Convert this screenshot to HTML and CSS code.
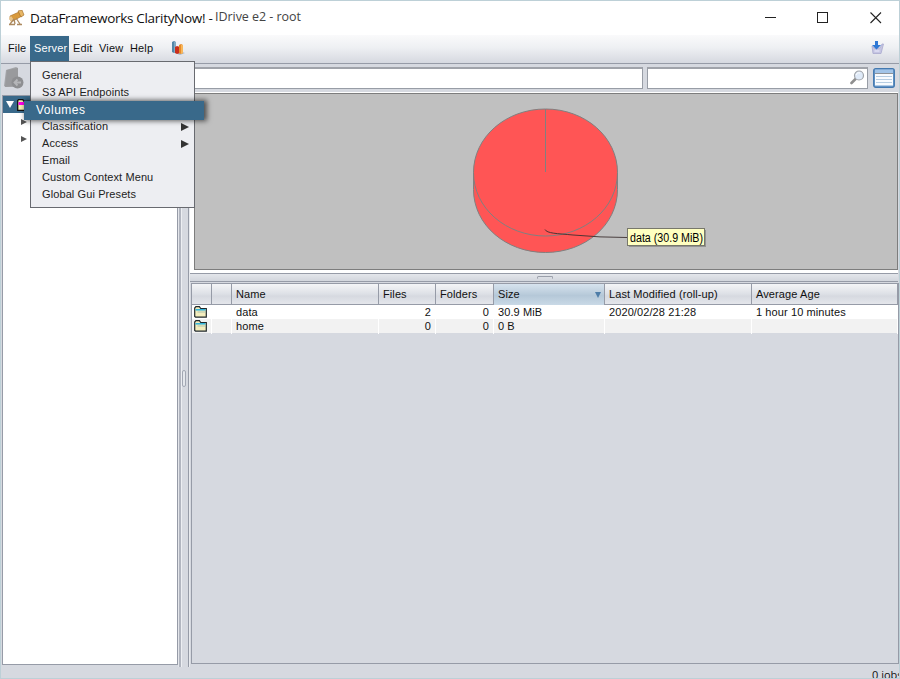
FILE: index.html
```html
<!DOCTYPE html>
<html>
  <head>
    <meta charset="utf-8">
    <title>DataFrameworks ClarityNow!</title>
    <link rel="stylesheet" href="styles.css">
  </head>
  <body>
    <div class="window">
      <div class="titlebar">
        <svg class="app-icon" width="17" height="16" viewBox="0 0 17 16">
          <path d="M2 6l9-4 3 4-9 5-3-1z" fill="#d99a3c" stroke="#a86a20" stroke-width=".6"/>
          <path d="M10 1l4-1 2 5-3 2z" fill="#e8b766" stroke="#9c6420" stroke-width=".6"/>
          <path d="M1 8l2-2 3 4-3 2z" fill="#e9c58c"/>
          <path d="M6 9l-4 5M6 9l1 5M8 8l4 6M1 14.500h6M9 14.500h5" stroke="#ad8a60" stroke-width="1.300" fill="none"/>
        </svg>
        <span class="app-name">DataFrameworks ClarityNow! -</span>
        <span class="doc-name">IDrive e2 - root</span>
        <svg class="win-buttons" width="118" height="14" viewBox="0 0 118 14" fill="none" stroke="#222">
          <path d="M0 6.5h11" />
          <rect x="52.5" y="1.5" width="10" height="10"/>
          <path d="M105.500 1.500l10.500 10.500M116 1.500l-10.500 10.500" stroke-width="1.100"/>
        </svg>
      </div>

      <div class="menubar">
        <span class="menu m-file">File</span>
        <div class="menu m-server open">Server
          <div class="dropdown">
            <div class="item">General</div>
            <div class="item">S3 API Endpoints</div>
            <div class="item">&nbsp;</div>
            <div class="item">Classification<i class="arrow"></i></div>
            <div class="item">Access<i class="arrow"></i></div>
            <div class="item">Email</div>
            <div class="item">Custom Context Menu</div>
            <div class="item">Global Gui Presets</div>
            <div class="selected">Volumes</div>
          </div>
        </div>
        <span class="menu m-edit">Edit</span>
        <span class="menu m-view">View</span>
        <span class="menu m-help">Help</span>
        <svg class="bars" width="14" height="14" viewBox="0 0 14 14">
          <path d="M4 12l5 2 5-2-3-1z" fill="#aab8c8"/>
          <path d="M1 1l2-1 2 1v10l-2 1-2-1z" fill="#5387a8"/>
          <path d="M3 1l2 0v10l-2 1z" fill="#80abc5"/>
          <path d="M4 6l2-1 3 1v6l-3 1-2-1z" fill="#c92f1d"/>
          <path d="M8 4l2-1 2 1v8l-2 1-2-1z" fill="#e98b27"/>
          <path d="M10 4l2 0v8l-2 1z" fill="#f7b75c"/>
        </svg>
        <svg class="download" width="13" height="13" viewBox="0 0 13 13">
          <path d="M1 5l2 2h6l2-4h1.500l-2.500 9.500h-8z" fill="#c5c5e2" stroke="#a9a9cf" stroke-width=".8"/>
          <path d="M3.500 10h5" stroke="#eef"/>
          <path d="M4 0h3v4h3l-4.500 4.500L1 4h3z" fill="#2f78d5"/>
        </svg>
      </div>

      <div class="toolbar">
        <svg class="back" width="20" height="22" viewBox="0 0 20 22">
          <path d="M2 3l10-3 2 1 0 19-12 0-2-1z" fill="#a4a5a8"/>
          <path d="M3 3l11-2v17l-13 2z" fill="#999a9d"/>
          <circle cx="13.500" cy="15.500" r="6" fill="#8d8e91"/>
          <path d="M17 15.500h-6M13.500 12.500l-3 3 3 3" stroke="#b5b6b9" stroke-width="1.800" fill="none"/>
        </svg>
        <div class="field path"></div>
        <div class="field search">
          <svg width="15" height="15" viewBox="0 0 15 15">
            <path d="M5.500 9L1.500 13" stroke="#8f8f8f" stroke-width="2.600" stroke-linecap="round"/>
            <circle cx="9" cy="5.500" r="4.500" fill="#dfeaf8" stroke="#a0a4aa" stroke-width="1.200"/>
            <path d="M6 5a3 3 0 0 1 4-2" stroke="#fff" fill="none"/>
          </svg>
        </div>
        <svg class="list" width="22" height="20" viewBox="0 0 22 20">
          <rect x=".7" y=".7" width="20.600" height="18.600" rx="2" fill="#6f9dcc" stroke="#4379b0" stroke-width="1.300"/>
          <rect x="2" y="1.500" width="18" height="3.500" fill="#a1c4e8"/>
          <rect x="2" y="5" width="18" height="12.500" fill="#f8fbfe"/>
          <path d="M2 5.500h18" stroke="#8d9298"/>
          <path d="M3 8.500h16M3 11.500h16M3 14.500h16" stroke="#b6cde2"/>
        </svg>
      </div>

      <div class="main">
        <div class="sidebar">
          <div class="tree">
            <div class="node root">
              <i class="tri-down"></i>
              <svg width="13" height="12" viewBox="0 0 13 12">
                <path d="M.7 11.300V1.500l1-1h4l1.500 2h5v8.800z" fill="#f4f0b4" stroke="#111" stroke-width="1.300"/>
                <path d="M1.500 3h10.500v3h-10.500z" fill="#f0e"/>
              </svg>
            </div>
            <div class="node"><i class="tri"></i></div>
            <div class="node"><i class="tri"></i></div>
          </div>
        </div>
        <div class="vsplit"><i></i></div>
        <div class="content">
          <div class="chart">
            <svg width="702" height="175" viewBox="195 94 702 175">
              <path d="M473.500 172.500C473.500 137 506 109 545.500 109s72 28 72 63.500v17C617.500 225 585 252.500 545.500 252.500s-72-27.500-72-63z" fill="#f55" stroke="#808080"/>
              <path d="M473.500 172.500C473.500 208 506 236 545.500 236s72-28 72-63.500" fill="none" stroke="#808080"/>
              <rect x="545" y="109" width="1" height="63" fill="#808080"/>
              <path d="M545 229.500c2 4 12 4 28 5.500q27 2.500 54 2.500" fill="none" stroke="#3c3030" stroke-width=".9"/>
              <rect x="629" y="230" width="77" height="17" fill="#939393"/>
              <rect x="627.500" y="228.500" width="77" height="17" fill="#ffffc0" stroke="#77776a"/>
              <text x="630" y="242" textLength="73" lengthAdjust="spacingAndGlyphs">data (30.9 MiB)</text>
            </svg>
          </div>
          <div class="hsplit"><i></i></div>
          <div class="table">
            <div class="row head">
              <div></div><div></div><div>Name</div><div>Files</div><div>Folders</div>
              <div class="sorted">Size<i></i></div><div class="mod">Last Modified (roll-up)</div><div>Average Age</div>
            </div>
            <div class="row">
              <div class="icon"><svg width="13" height="12" viewBox="0 0 13 12"><path d="M.7 10.500V2l1.200-1.300h3.500l1.300 1.800h5.600v8.600h-10.800z" fill="#f3edbd" stroke="#20282b" stroke-width="1.200"/><path d="M1.500 3.800h10" stroke="#31b4dc" stroke-width="1.600"/><path d="M3.500 6h8.500" stroke="#9fb8a8" stroke-width=".8"/></svg></div>
              <div></div><div>data</div><div class="num">2</div><div class="num">0</div>
              <div>30.9 MiB</div><div class="mod">2020/02/28 21:28</div><div>1 hour 10 minutes</div>
            </div>
            <div class="row alt">
              <div class="icon"><svg width="13" height="12" viewBox="0 0 13 12"><path d="M.7 10.500V2l1.200-1.300h3.500l1.300 1.800h5.600v8.600h-10.800z" fill="#f3edbd" stroke="#20282b" stroke-width="1.200"/><path d="M1.500 3.800h10" stroke="#31b4dc" stroke-width="1.600"/><path d="M3.500 6h8.500" stroke="#9fb8a8" stroke-width=".8"/></svg></div>
              <div></div><div>home</div><div class="num">0</div><div class="num">0</div>
              <div>0 B</div><div class="mod"></div><div></div>
            </div>
          </div>
        </div>
      </div>
      <div class="status"><span>0 jobs</span></div>
    </div>
  </body>
</html>
```
FILE: styles.css
```css
* {
  box-sizing: border-box;
}

body {
  margin: 0;
  font-family: "Liberation Sans", Arial, sans-serif;
  font-size: 11px;
  color: #111;
}

.window {
  display: flex;
  flex-direction: column;
  width: 900px;
  height: 679px;
  border: 1px solid #bdd0d7;
  background: #d6d9e0;
  overflow: hidden;
}

.titlebar {
  display: flex;
  height: 34px;
  padding: 8px 0 0 7px;
  background: #fff;
  font-family: "Open Sans", sans-serif;
  font-size: 13.5px;
  line-height: 18px;
  letter-spacing: -0.3px;
  white-space: nowrap;
}

.app-icon {
  margin-top: 1px;
}

.app-name {
  width: 181px;
  margin-left: 5px;
}

.doc-name {
  width: 88px;
  margin: -1px 0 0 4px;
  font-size: 12.5px;
  letter-spacing: -0.05px;
  color: #444;
}

.win-buttons {
  margin: 2px 0 0 462px;
}

.menubar {
  display: flex;
  height: 29px;
  padding: 1px 0 0 7px;
  border-bottom: 1px solid #969ba7;
  background: linear-gradient(#fafafb, #eef0f3 45%, #d6d9e0);
  line-height: 25px;
}

.menu {
  letter-spacing: 0.15px;
  white-space: nowrap;
}

.m-file {
  width: 22px;
}

.m-server {
  position: relative;
  width: 39px;
  height: 25px;
  padding-left: 4px;
}

.m-edit {
  width: 26px;
  margin-left: 4px;
}

.m-view {
  width: 31px;
}

.m-help {
  width: 41px;
}

.open {
  background: #39698a;
  color: #fff;
}

.bars {
  margin-top: 5px;
}

.download {
  margin: 5px 15px 0 auto;
}

.dropdown {
  position: absolute;
  left: 0;
  top: 25px;
  z-index: 5;
  width: 165px;
  height: 147px;
  padding: 5px 0 0 11px;
  border: 1px solid #686a70;
  background: #edeef2;
  color: #222;
  line-height: 17px;
  letter-spacing: 0.1px;
}

.item {
  display: flex;
  align-items: center;
  height: 17px;
}

.arrow {
  margin: 0 5px 0 auto;
  border: 4px solid transparent;
  border-left: 8px solid #333;
  border-right: 0;
}

.selected {
  position: absolute;
  left: -7px;
  top: 39px;
  width: 180px;
  height: 19px;
  padding-left: 12px;
  background: #39698a;
  box-shadow: 2px 0 5px 1px rgba(0, 0, 0, .6);
  color: #fff;
  font-size: 12px;
  letter-spacing: 0.5px;
  line-height: 19px;
}

.toolbar {
  display: flex;
  height: 28px;
  padding: 3px 4px 0 3px;
}

.back {
  margin-right: 11px;
}

.field {
  height: 22px;
  border: 1px solid #989da6;
  border-top: 2px solid #a0a3aa;
  background: #fff;
}

.path {
  width: 608px;
}

.search {
  display: flex;
  justify-content: flex-end;
  width: 221px;
  margin-left: 4px;
  padding: 1px 2px 0 0;
}

.list {
  margin: 1px 0 0 5px;
}

.main {
  display: flex;
  flex: 1;
}

.sidebar {
  width: 177px;
  padding: 3px 0 0 1px;
}

.tree {
  height: 570px;
  border: 1px solid #969ba7;
  background: #fff;
}

.node {
  display: flex;
  align-items: center;
  height: 17px;
  padding-left: 18px;
}

.root {
  padding-left: 3px;
  background: #39698a;
}

.root svg {
  margin-left: 3px;
}

.tri-down {
  border: 4px solid transparent;
  border-top: 7px solid #fff;
  border-bottom: 0;
}

.tri {
  border: 3px solid transparent;
  border-left: 6px solid #555;
  border-right: 0;
}

.vsplit {
  display: flex;
  align-items: center;
  width: 12px;
  height: 575px;
  padding: 0 0 3px 4px;
  background: linear-gradient(90deg, #e4e6eb 0 1px, #b2b6c0 1px 3px, #eceef2 3px 4px, #d6d9e0 4px 10px, #969ba7 10px 11px, #e8eaee 11px);
}

.vsplit i {
  width: 4px;
  height: 17px;
  border: 1px solid #a2a7b3;
  border-radius: 2px;
  background: #e4e7ec;
}

.content {
  width: 708px;
  height: 573px;
}

.chart {
  height: 182px;
  padding: 1px 0 0 4px;
  border-bottom: 1px solid #969ba7;
  background: #fff;
}

.chart svg {
  display: block;
  width: 704px;
  height: 177px;
  border: 1px solid #7d7d7d;
  background: #c0c0c0;
}

.chart text {
  font-size: 12px;
}

.hsplit {
  height: 8px;
  border-bottom: 1px solid #969ba7;
  padding: 2px 0 0 2px;
  background: linear-gradient(#e4e6eb, #d2d6dd);
}

.hsplit i {
  display: block;
  width: 16px;
  height: 3px;
  margin: 0 auto;
  border: 1px solid #9a9faa;
  border-bottom: 0;
  border-radius: 2px;
}

.table {
  width: 708px;
  height: 381px;
  margin: 1px 0 0 1px;
  border: 1px solid #969ba7;
}

.row {
  display: grid;
  grid-template-columns: 20px 20px 147px 57px 58px 111px 147px 1fr;
  height: 14px;
  background: #fff;
  line-height: 15px;
}

.row div {
  padding-left: 4px;
  border-right: 1px solid #fff;
  white-space: nowrap;
  letter-spacing: 0.1px;
}

.head {
  height: 21px;
  border-bottom: 1px solid #969ba7;
  background: linear-gradient(#f4f5f7, #dde0e6 50%, #d6d9e0 60%, #e4e6eb);
  line-height: 21px;
}

.head div {
  border-right-color: #969ba7;
}

.row .sorted {
  display: flex;
  align-items: center;
  background: linear-gradient(#d7e3ee, #b5c8d8 55%, #c9d9e6);
}

.sorted i {
  margin: 0 3px 0 auto;
  border: 3.5px solid transparent;
  border-top: 6px solid #4e7da8;
  border-bottom: 0;
}

.alt {
  background: #f2f2f2;
}

.row .icon {
  padding-left: 2px;
}

.icon svg {
  display: block;
  margin-top: 1px;
}

.row .num {
  padding-right: 4px;
  text-align: right;
}

.status {
  height: 11px;
  padding-left: 871px;
  font-family: "Open Sans", sans-serif;
  line-height: 16px;
  white-space: nowrap;
}
```
